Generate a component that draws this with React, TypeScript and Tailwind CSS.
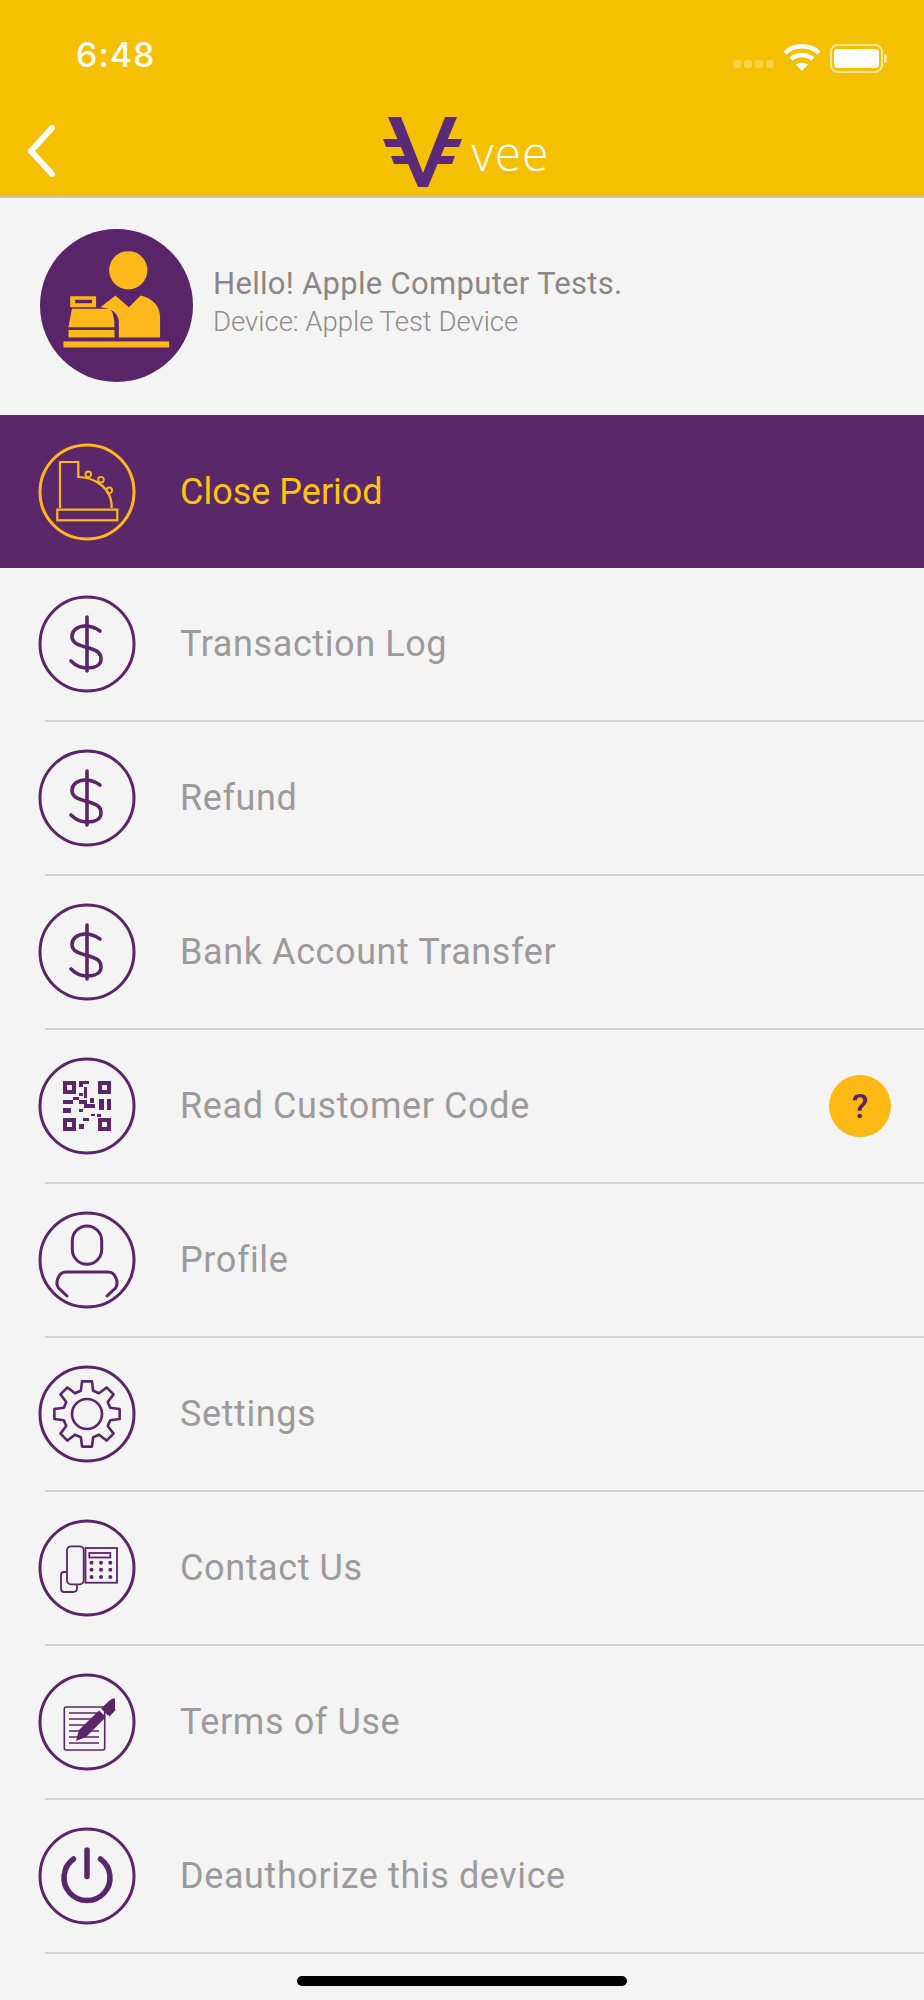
import React from "react";

const P = "#5b2569";
const Y = "#ffb81c";

function Ring({ children, color = P, size = 100 }: { children?: React.ReactNode; color?: string; size?: number }) {
  return (
    <svg width={size} height={size} viewBox="0 0 100 100" fill="none" stroke={color} strokeWidth={3} className="shrink-0">
      <circle cx={50} cy={50} r={47} />
      {children}
    </svg>
  );
}

const Dollar = () => (
  <Ring>
    <path d="M50 23V77" strokeWidth={3.6} strokeLinecap="round" />
    <path d="M63 37Q56 32 48 32C40 32 35 37 35 42.5C35 49 41 51 50 53.5C59 56 64 58 64 65C64 71 58 74 50 74C43 74 38 71 34 67" strokeWidth={3.6} strokeLinecap="round" />
  </Ring>
);

const Qr = () => (
  <Ring>
    <g fill={P} stroke="none">
      <path fillRule="evenodd" d="M26 25H39V38H26ZM30 29V34H35V29Z" />
      <path fillRule="evenodd" d="M61 25H74V38H61ZM65 29V34H70V29Z" />
      <path fillRule="evenodd" d="M26 62H39V75H26ZM30 66V71H35V66Z" />
      <path d="M42 25H52V28H46V31H42ZM47 31H50V42H47ZM42 37H46V40H42ZM26 44H36V48H26ZM36 41H42V44H36ZM42 44H50V48H42ZM47 48H58V52H47ZM53 42H57V47H53ZM62 43H67V54H62ZM70 43H74V54H70ZM42 53H46V56H42ZM26 52H34V57H26ZM54 58H58V60H54ZM46 62H52V65H46ZM42 68H47V73H42ZM60 58H64V61H60ZM61 62H74V75H61Z" />
    </g>
    <rect x={65} y={66} width={5} height={5} fill="#f4f4f4" stroke="none" />
  </Ring>
);

const Person = () => (
  <Ring>
    <rect x={35.3} y={16} width={29.4} height={38.3} rx={14.7} strokeWidth={3} />
    <path d="M30 86L21.5 78C18 73 21 62 29 62H71C79 62 82 73 78.5 78L70 86" strokeWidth={3} strokeLinecap="round" />
  </Ring>
);

function gearPath() {
  const pts: string[] = [];
  for (let i = 0; i < 8; i++) {
    const a = (i * Math.PI) / 4 - Math.PI / 2;
    const at = (r: number, d: number) => `${(50 + r * Math.cos(a + d)).toFixed(2)} ${(50 + r * Math.sin(a + d)).toFixed(2)}`;
    pts.push(at(24, -0.26), at(33, -0.15), at(33, 0.15), at(24, 0.26));
  }
  return "M" + pts.join("L") + "Z";
}

const Gear = () => (
  <Ring>
    <path d={gearPath()} strokeWidth={2.6} strokeLinejoin="round" />
    <circle cx={50} cy={50} r={15} strokeWidth={2.6} />
  </Ring>
);

const Phone = () => (
  <Ring>
    <g strokeWidth={1.8}>
      <rect x={30} y={28.3} width={16.7} height={38} rx={4} />
      <path d="M30 54H27Q24 54 24 57V71Q24 74 27 74H36Q40 74 40 70V66.5" />
      <rect x={48.5} y={30} width={31.5} height={34.7} />
      <rect x={52.3} y={35} width={21} height={4.5} />
    </g>
    <g fill={P} stroke="none">
      {[54.5, 64, 73.3].map((x) =>
        [44.7, 51.7, 59].map((y) => <circle key={`${x}-${y}`} cx={x} cy={y} r={2} />)
      )}
    </g>
  </Ring>
);

const Pen = () => (
  <Ring>
    <rect x={27.3} y={35} width={40.4} height={43} rx={2} strokeWidth={1.6} />
    <path d="M32 41H62M32 47H58M32 53H50M32 59H44M47 59H62M32 65H62M32 71H62" strokeWidth={1.6} />
    <path d="M39 69L42 58L62 38.5L69 45L49 65Z" fill={P} stroke="none" />
    <path d="M64 36.5L72 29Q77 25 78 27L78 37Q78 39 76 41L71 43.5Z" fill={P} stroke="none" />
    <path d="M72 44L78 37" strokeWidth={1.6} />
  </Ring>
);

const Power = () => (
  <Ring>
    <path d="M50 24V50.5" strokeWidth={5.5} strokeLinecap="round" />
    <path d="M36.5 33A23 23 0 1 0 63.5 33" strokeWidth={5.5} strokeLinecap="round" />
  </Ring>
);

const Register = () => (
  <Ring color={Y} size={100}>
    <path d="M23 66V20H41.3V35C52 35 75 42 74.7 66" strokeWidth={2.2} />
    <rect x={20.3} y={67.6} width={60} height={10.7} strokeWidth={2.2} />
    <circle cx={51.3} cy={32.3} r={2.8} strokeWidth={1.8} />
    <circle cx={64} cy={37.7} r={2.8} strokeWidth={1.8} />
    <circle cx={72.3} cy={48.3} r={2.8} strokeWidth={1.8} />
  </Ring>
);

const Cashier = () => (
  <svg width={153} height={153} viewBox="0 0 152 152" className="shrink-0">
    <circle cx={76} cy={76} r={76} fill="#5a2568" />
    <g fill={Y}>
      <circle cx={87.7} cy={41} r={19} />
      <path d="M60 77.7L75 66L88.3 77.7L100 66C112 69 119.3 76 119.3 87.7V107.7H78.3V91C77 84 73 79 60 77.7Z" />
      <path fillRule="evenodd" d="M30 66.7H55.7V77.7H30ZM35 70.3V73.7H51.7V70.3Z" />
      <path d="M31.7 79.3H70C73 84 74 90 74 97.7H28.3Z" />
      <rect x={28.3} y={100.3} width={45.7} height={7.4} />
      <rect x={23.3} y={111.7} width={105} height={6} />
    </g>
  </svg>
);

function Logo() {
  return (
    <div className="flex items-end gap-[9px]">
      <svg width={80} height={70} viewBox="0 0 80 70" fill="#5a2a78" className="shrink-0">
        <path d="M5 0H18L40 56L62 0H74L45 70H35Z" />
        <path d="M0 22H22L25 30H3ZM8 39H29L32 47H11ZM58 22H79L76 30H55ZM51 39H72L69 47H48Z" />
      </svg>
      <span className="mb-[13px] text-[48px] leading-[42px] font-light text-white tracking-[1px] [font-family:'Open_Sans',sans-serif]">vee</span>
    </div>
  );
}

function StatusBar() {
  return (
    <div className="flex h-[83px] items-end justify-between pb-[11px] pl-[76px] pr-[37px]">
      <span className="text-[34px] leading-[34px] font-medium text-white tracking-[1px] [font-family:Inter,sans-serif]">6:48</span>
      <div className="flex items-end">
        <div className="mb-[4px] flex gap-[3px]">
          <div className="h-[8px] w-[8px] rounded-[3px] bg-white/30" />
          <div className="h-[8px] w-[8px] rounded-[3px] bg-white/30" />
          <div className="h-[8px] w-[8px] rounded-[3px] bg-white/30" />
          <div className="h-[8px] w-[8px] rounded-[3px] bg-white/30" />
        </div>
        <svg width={38} height={28} viewBox="0 0 38 28" fill="none" stroke="white" strokeWidth={4.5} className="ml-[9px] mb-[1px]">
          <path d="M2 10C11 1 27 1 36 10" />
          <path d="M8 16C14 10.5 24 10.5 30 16" />
          <path d="M19 28L13 21.5C16.5 19 21.5 19 25 21.5Z" fill="white" stroke="none" />
        </svg>
        <div className="mb-[-1px] ml-[9px] flex items-center">
          <div className="flex h-[29px] w-[53px] items-center justify-center rounded-[8px] border-2 border-white/60">
            <div className="h-[19px] w-[45px] rounded-[4px] bg-white" />
          </div>
          <div className="ml-[1px] h-[9px] w-[3px] rounded-r-[2px] bg-white/60" />
        </div>
      </div>
    </div>
  );
}

function Row({ icon, label, extra }: { icon: React.ReactNode; label: string; extra?: React.ReactNode }) {
  return (
    <div className="flex h-[154px] flex-col">
      <div className="flex flex-1 items-center pl-[37px] pr-[33px]">
        {icon}
        <span className="ml-[43px] flex-1 text-[36px] leading-[44px] text-[#9d9a9b] tracking-[0.6px]">{label}</span>
        {extra}
      </div>
      <div className="ml-[45px] h-[2px] bg-[#d3d2d4]" />
    </div>
  );
}

export default function App() {
  return (
    <div className="relative flex h-[2000px] w-[924px] flex-col overflow-hidden bg-[#f4f4f4] [font-family:Roboto,sans-serif]">
      <header className="h-[198px] border-b-2 border-[#c9c5b8] bg-[#f5c000]">
        <StatusBar />
        <div className="relative flex h-[113px] items-start justify-center pt-[34px]">
          <svg width={34} height={54} viewBox="0 0 34 54" fill="none" stroke="white" strokeWidth={6} strokeLinecap="round" strokeLinejoin="round" className="absolute left-[25px] top-[41px]">
            <path d="M27 4L6 27L27 50" />
          </svg>
          <div className="ml-[8px]"><Logo /></div>
        </div>
      </header>

      <section className="flex h-[217px] items-start pl-[40px] pt-[31px]">
        <Cashier />
        <div className="ml-[20px] mt-[35px] flex flex-col">
          <span className="text-[31px] leading-[40px] text-[#8c8786] tracking-[0.3px]">Hello! Apple Computer Tests.</span>
          <span className="text-[27.5px] leading-[36px] font-light text-[#8f8b8b]">Device: Apple Test Device</span>
        </div>
      </section>

      <div className="flex h-[153px] items-center bg-[#5a2768] pl-[37px]">
        <Register />
        <span className="ml-[43px] text-[36px] leading-[44px] text-[#fec50f]">Close Period</span>
      </div>

      <div className="flex flex-col">
        <Row icon={<Dollar />} label="Transaction Log" />
        <Row icon={<Dollar />} label="Refund" />
        <Row icon={<Dollar />} label="Bank Account Transfer" />
        <Row
          icon={<Qr />}
          label="Read Customer Code"
          extra={
            <div className="flex h-[62px] w-[62px] items-center justify-center rounded-full bg-[#ffb914] text-[34px] font-medium text-[#5b2569]">?</div>
          }
        />
        <Row icon={<Person />} label="Profile" />
        <Row icon={<Gear />} label="Settings" />
        <Row icon={<Phone />} label="Contact Us" />
        <Row icon={<Pen />} label="Terms of Use" />
        <Row icon={<Power />} label="Deauthorize this device" />
      </div>

      <div className="absolute bottom-[14px] left-[297px] h-[10px] w-[330px] rounded-full bg-black" />
    </div>
  );
}
